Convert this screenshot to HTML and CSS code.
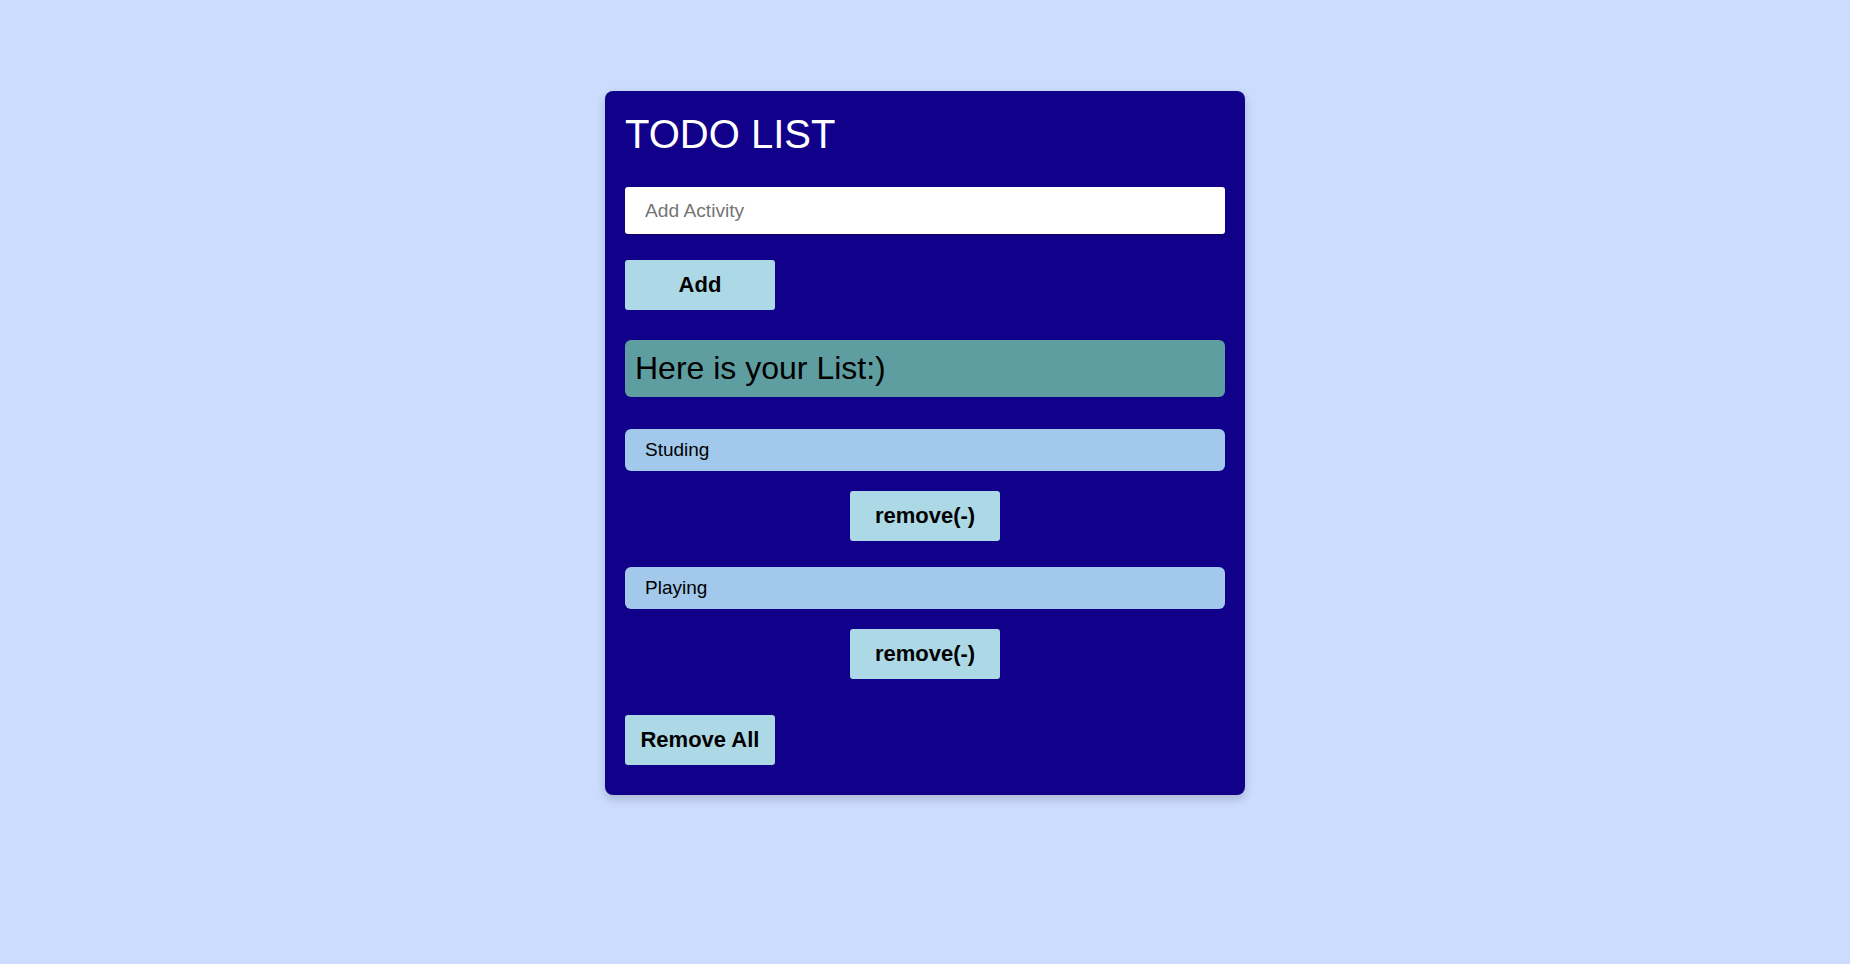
FILE: index.html
```html
<!DOCTYPE html>
<html lang="en">
<head>
<meta charset="utf-8">
<title>TODO LIST</title>
<link rel="stylesheet" href="styles.css">
</head>
<body>
<main class="page">
  <section class="card">
    <h1 class="title">TODO LIST</h1>
    <input class="activity-input" type="text" placeholder="Add Activity">
    <button class="btn btn-add">Add</button>
    <h2 class="list-heading">Here is your List:)</h2>
    <ul class="todo-list">
      <li class="todo-item">
        <div class="todo-text">Studing</div>
        <button class="btn btn-remove">remove(-)</button>
      </li>
      <li class="todo-item">
        <div class="todo-text">Playing</div>
        <button class="btn btn-remove">remove(-)</button>
      </li>
    </ul>
    <button class="btn btn-remove-all">Remove All</button>
  </section>
</main>
</body>
</html>
```
FILE: styles.css
```css
* { box-sizing: border-box; }

html, body {
  margin: 0;
  padding: 0;
}

body {
  background: #ccdcfe;
  font-family: "Liberation Sans", Arial, sans-serif;
  min-height: 964px;
}

.page {
  display: flex;
  justify-content: center;
  padding-top: 91px;
}

.card {
  width: 640px;
  background: #10008a;
  border-radius: 8px;
  box-shadow: 0 4px 10px rgba(0, 0, 0, 0.18);
  padding: 20px 20px 30px;
  display: flex;
  flex-direction: column;
  align-items: flex-start;
}

.title {
  margin: 0;
  color: #ffffff;
  font-size: 40px;
  font-weight: normal;
  line-height: 46px;
}

.activity-input {
  margin-top: 30px;
  width: 100%;
  height: 47px;
  border: none;
  border-radius: 3px;
  background: #ffffff;
  box-shadow: 0 1px 1px rgba(0, 0, 0, 0.35);
  padding: 0 20px;
  font-family: "Liberation Sans", Arial, sans-serif;
  font-size: 19.2px;
  color: #222;
  outline: none;
}

.activity-input::placeholder {
  color: #757575;
}

.btn {
  width: 150px;
  height: 50px;
  border: none;
  border-radius: 3px;
  background: #add8e6;
  color: #000;
  font-family: "Liberation Sans", Arial, sans-serif;
  font-weight: bold;
  font-size: 22px;
  padding: 0;
  cursor: pointer;
}

.btn-add {
  margin-top: 26px;
}

.list-heading {
  margin: 30px 0 0;
  width: 100%;
  height: 57px;
  background: #5f9ea0;
  border-radius: 6px;
  padding: 0 10px;
  font-size: 32px;
  font-weight: normal;
  line-height: 57px;
  color: #000;
}

.todo-list {
  list-style: none;
  margin: 32px 0 0;
  padding: 0;
  width: 100%;
  display: flex;
  flex-direction: column;
  gap: 26px;
}

.todo-item {
  display: flex;
  flex-direction: column;
  align-items: center;
  gap: 20px;
}

.todo-text {
  width: 100%;
  height: 42px;
  background: #a2c9ec;
  border-radius: 6px;
  padding: 0 20px;
  font-size: 19px;
  line-height: 42px;
  color: #000;
}

.btn-remove-all {
  margin-top: 36px;
}
```
